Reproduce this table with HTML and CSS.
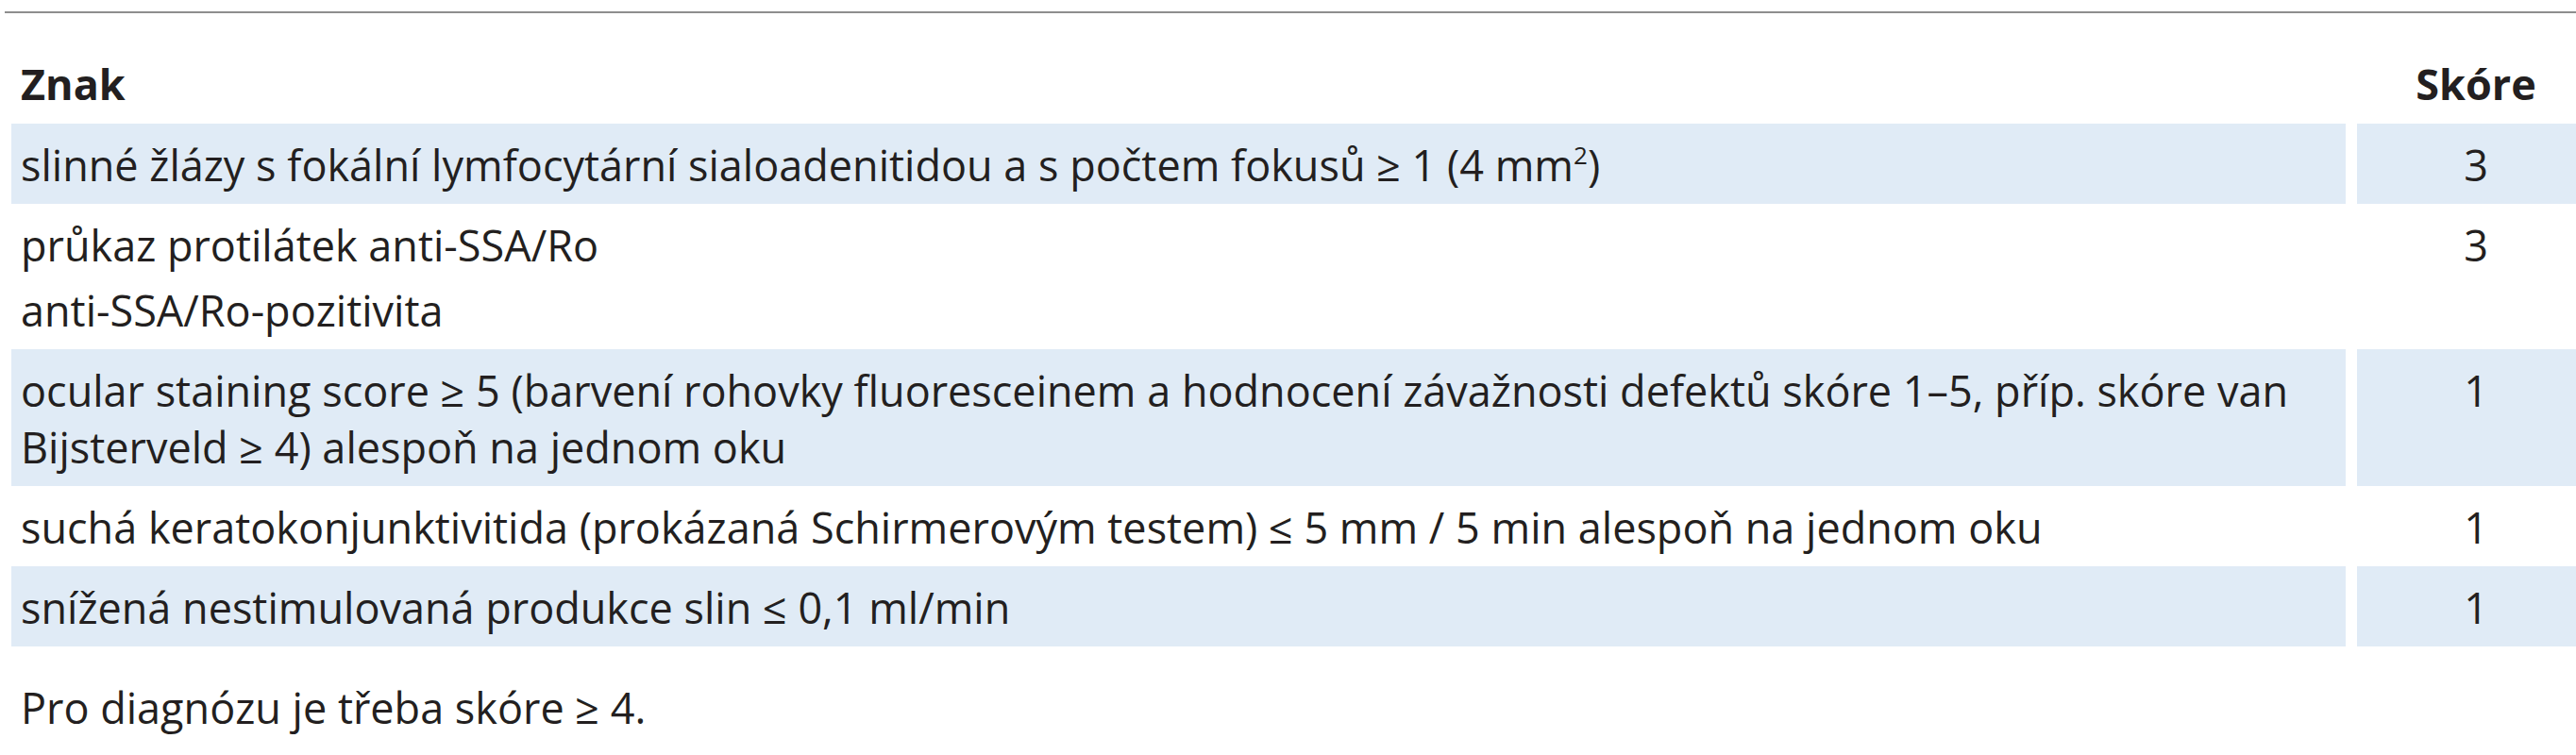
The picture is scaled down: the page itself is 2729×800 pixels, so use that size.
FILE: index.html
```html
<!DOCTYPE html>
<html lang="cs">
<head>
<meta charset="utf-8">
<title>Skóre</title>
<link rel="stylesheet" href="styles.css">
</head>
<body>
<div class="page">
  <div class="rule"></div>
  <div class="table">
    <div class="row head">
      <div class="cell sign">Znak</div>
      <div class="cell score">Skóre</div>
    </div>
    <div class="row shaded">
      <div class="cell sign">slinné žlázy s fokální lymfocytární sialoadenitidou a s počtem fokusů ≥ 1 (4 mm<sup class="sup">2</sup>)</div>
      <div class="cell score">3</div>
    </div>
    <div class="row">
      <div class="cell sign">
        <p class="para">průkaz protilátek anti-SSA/Ro</p>
        <p class="para">anti-SSA/Ro-pozitivita</p>
      </div>
      <div class="cell score">3</div>
    </div>
    <div class="row shaded">
      <div class="cell sign">ocular staining score ≥ 5 (barvení rohovky fluoresceinem a hodnocení závažnosti defektů skóre 1–5, příp. skóre van Bijsterveld ≥ 4) alespoň na jednom oku</div>
      <div class="cell score">1</div>
    </div>
    <div class="row">
      <div class="cell sign">suchá keratokonjunktivitida (prokázaná Schirmerovým testem) ≤ 5 mm / 5 min alespoň na jednom oku</div>
      <div class="cell score">1</div>
    </div>
    <div class="row shaded">
      <div class="cell sign">snížená nestimulovaná produkce slin ≤ 0,1 ml/min</div>
      <div class="cell score">1</div>
    </div>
  </div>
  <p class="note">Pro diagnózu je třeba skóre ≥ 4.</p>
</div>
</body>
</html>
```
FILE: styles.css
```css
html, body {
  margin: 0;
  padding: 0;
  background: #ffffff;
}

body {
  font-family: "Open Sans", "Noto Sans", "DejaVu Sans", sans-serif;
  font-size: 45px;
  line-height: 60px;
  color: #231f20;
}

.page {
  padding-top: 12px;
}

.rule {
  margin-left: 5px;
  height: 0;
  border-top: 2px solid #8e8e8e;
}

.table {
  display: flex;
  flex-direction: column;
  margin-left: 12px;
}

.row {
  display: grid;
  grid-template-columns: 1fr 232px;
  column-gap: 12px;
}

.cell {
  padding: 14px 10px 11px 10px;
}

.shaded .cell {
  background: #e0ebf6;
}

.head .cell {
  font-weight: 700;
  padding-top: 45px;
  padding-bottom: 12px;
}

.score {
  text-align: center;
  padding-left: 20px;
  padding-right: 0;
}

.para {
  margin: 0;
}

.para + .para {
  margin-top: 9px;
}

.sup {
  font-size: 26px;
  line-height: 0;
  vertical-align: 18px;
}

.note {
  margin: 35px 0 0 22px;
}
```
